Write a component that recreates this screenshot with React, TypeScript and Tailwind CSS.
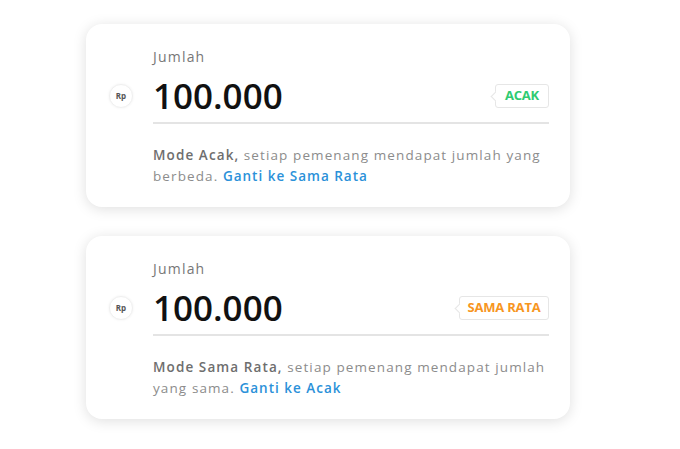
const cards = [
  {
    badge: 'ACAK',
    badgeColor: 'text-[#2fcb72]',
    badgeWidth: 'w-[54px]',
    mode: 'Mode Acak,',
    rest: ' setiap pemenang mendapat jumlah yang berbeda. ',
    link: 'Ganti ke Sama Rata',
  },
  {
    badge: 'SAMA RATA',
    badgeColor: 'text-[#f7961f]',
    badgeWidth: 'w-[90px]',
    mode: 'Mode Sama Rata,',
    rest: ' setiap pemenang mendapat jumlah yang sama. ',
    link: 'Ganti ke Acak',
  },
]

function AmountCard({ card }: { card: (typeof cards)[number] }) {
  return (
    <div className="w-[484px] rounded-[16px] bg-white shadow-[0_2px_14px_rgba(0,0,0,0.13)] pl-[23px] pr-[21px] pt-[24px] pb-[20px]">
      <div className="grid grid-cols-[24px_1fr] gap-x-[20px]">
        <div />
        <div className="text-[14px] leading-[18px] text-[#777] tracking-[1.2px]">Jumlah</div>

        <div className="flex items-center mt-[10px]">
          <div className="w-[24px] h-[24px] rounded-full bg-white border border-[#f0f0f0] shadow-[0_0_3px_rgba(0,0,0,0.06)] flex items-center justify-center text-[8px] font-bold text-[#555]">
            Rp
          </div>
        </div>
        <div className="mt-[10px] flex items-center justify-between h-[40px]">
          <span className="text-[35px] leading-[40px] font-semibold text-[#111]">100.000</span>
          <div className={`relative ${card.badgeWidth} h-[24px] border border-[#e6e6e6] rounded-[3px] bg-white flex items-center justify-center`}>
            <div className="absolute left-[-4px] top-[8px] w-[7px] h-[7px] rotate-45 bg-white border-l border-b border-[#e6e6e6]" />
            <span className={`relative text-[13px] font-bold tracking-[-0.2px] ${card.badgeColor}`}>{card.badge}</span>
          </div>
        </div>

        <div />
        <div className="mt-[6px] border-t-2 border-[#e4e4e4] pt-[21px] text-[13.5px] leading-[21px] text-[#8c8c8c] tracking-[1.1px]">
          <span className="font-semibold text-[#6e6e6e]">{card.mode}</span>
          {card.rest}
          <span className="font-semibold text-[#2b91d9] tracking-[1px]">{card.link}</span>
        </div>
      </div>
    </div>
  )
}

export default function App() {
  return (
    <div className="w-[680px] h-[449px] bg-white pt-[24px] pl-[86px] flex flex-col gap-[29px]" style={{ fontFamily: "'Open Sans', 'Noto Sans', sans-serif" }}>
      {cards.map((card) => (
        <AmountCard key={card.badge} card={card} />
      ))}
    </div>
  )
}
